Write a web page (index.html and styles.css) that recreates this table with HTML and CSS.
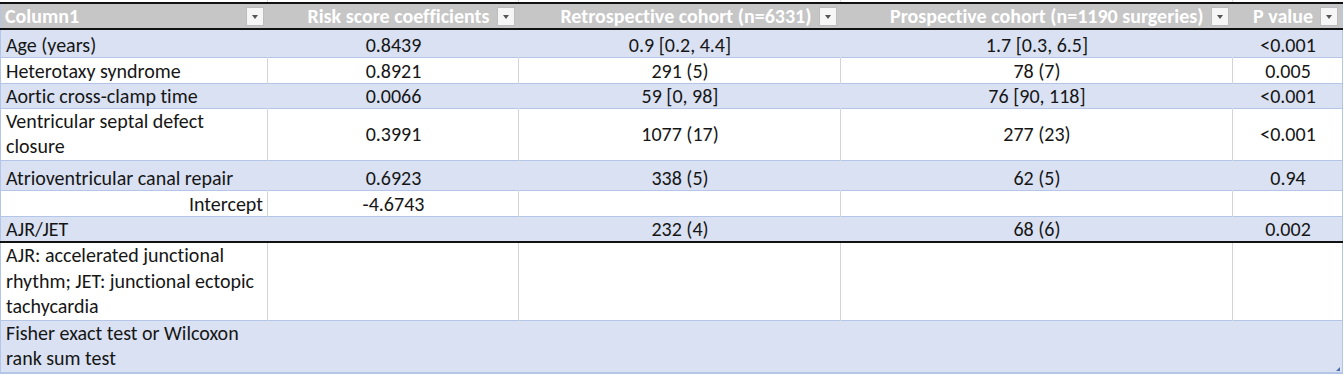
FILE: index.html
```html
<!DOCTYPE html>
<html>
<head>
<meta charset="utf-8">
<link rel="stylesheet" href="styles.css">
</head>
<body>
<div class="sheet">
<div class="topgrid"></div>
<table class="tbl">
  <colgroup>
    <col class="c1"><col class="c2"><col class="c3"><col class="c4"><col class="c5">
  </colgroup>
  <thead>
    <tr class="hdr">
      <th class="left"><span class="htext">Column1</span><span class="dd"></span></th>
      <th><span class="htext">Risk score coefficients</span><span class="dd"></span></th>
      <th><span class="htext">Retrospective cohort (n=6331)</span><span class="dd"></span></th>
      <th><span class="htext">Prospective cohort (n=1190 surgeries)</span><span class="dd"></span></th>
      <th><span class="htext">P value</span><span class="dd"></span></th>
    </tr>
  </thead>
  <tbody>
    <tr class="band r-28"><td class="left">Age (years)</td><td>0.8439</td><td>0.9 [0.2, 4.4]</td><td>1.7 [0.3, 6.5]</td><td>&lt;0.001</td></tr>
    <tr class="r-26"><td class="left">Heterotaxy syndrome</td><td>0.8921</td><td>291 (5)</td><td>78 (7)</td><td>0.005</td></tr>
    <tr class="band r-25"><td class="left">Aortic cross-clamp time</td><td>0.0066</td><td>59 [0, 98]</td><td>76 [90, 118]</td><td>&lt;0.001</td></tr>
    <tr class="r-vent"><td class="left wrap top">Ventricular septal defect closure</td><td class="mid">0.3991</td><td class="mid">1077 (17)</td><td class="mid">277 (23)</td><td class="mid">&lt;0.001</td></tr>
    <tr class="band r-30"><td class="left">Atrioventricular canal repair</td><td>0.6923</td><td>338 (5)</td><td>62 (5)</td><td>0.94</td></tr>
    <tr class="r-26"><td class="right">Intercept</td><td>-4.6743</td><td></td><td></td><td></td></tr>
    <tr class="band r-26 last"><td class="left">AJR/JET</td><td></td><td>232 (4)</td><td>68 (6)</td><td>0.002</td></tr>
    <tr class="r-notes first-foot"><td class="left wrap">AJR: accelerated junctional rhythm; JET: junctional ectopic tachycardia</td><td></td><td></td><td></td><td></td></tr>
    <tr class="band r-fisher nogrid"><td class="left wrap">Fisher exact test or Wilcoxon rank sum test</td><td></td><td></td><td></td><td></td></tr>
  </tbody>
</table>
<span class="grip"></span>
</div>
</body>
</html>
```

FILE: styles.css
```css
html, body {
  margin: 0;
  padding: 0;
  background: #ffffff;
}
body {
  font-family: Carlito, Lato, "Open Sans", "Liberation Sans", sans-serif;
  font-size: 20px;
  font-variant-ligatures: none;
  color: #161616;
}
.sheet {
  position: relative;
  width: 1342px;
}
.topgrid {
  height: 2px;
  background:
    linear-gradient(#dadada, #dadada) 267px 0 / 1px 2px no-repeat,
    linear-gradient(#dadada, #dadada) 518px 0 / 1px 2px no-repeat,
    linear-gradient(#dadada, #dadada) 840px 0 / 1px 2px no-repeat,
    linear-gradient(#dadada, #dadada) 1232px 0 / 1px 2px no-repeat;
}
.tbl {
  width: 1342px;
  table-layout: fixed;
  border-collapse: collapse;
  border-left: 1px solid #b4c6e7;
  border-right: 1px solid #b4c6e7;
}
.c1 { width: 267px; }
.c2 { width: 251px; }
.c3 { width: 322px; }
.c4 { width: 392px; }
.c5 { width: 110px; }

.hdr th {
  background: #c6c6c6;
  color: #ffffff;
  font-weight: 700;
  height: 24px;
  line-height: 24px;
  padding: 0 4px 0 4px;
  border-top: 2px solid #111111;
  border-bottom: 2px solid #111111;
  text-align: right;
  white-space: nowrap;
  overflow: hidden;
}
.hdr th.left { text-align: left; }
.hdr th.left .htext { float: left; }
.htext {
  display: inline-block;
  vertical-align: top;
  line-height: 24px;
}
.dd {
  display: inline-block;
  vertical-align: top;
  width: 16px;
  height: 17px;
  margin-top: 3px;
  margin-left: 7px;
  background: #f6f6f6;
  border: 1px solid #bdbdbd;
  position: relative;
}
.hdr th.left .dd { float: right; }
.dd::after {
  content: "";
  position: absolute;
  left: 5px;
  top: 7px;
  border-left: 3px solid transparent;
  border-right: 3px solid transparent;
  border-top: 4px solid #555555;
}

td {
  padding: 0 4px 0 5px;
  text-align: center;
  vertical-align: bottom;
  line-height: 24px;
  border-top: 1px solid #b4c6e7;
  border-left: 1px solid #d4d4d4;
  white-space: normal;
}
td.wrap { line-height: 25.5px; }
td.top { vertical-align: top; }
td.mid { vertical-align: middle; }
tr.band td {
  background: #d9e1f2;
  border-left-color: #d9e1f2;
}
td:first-child { border-left: none; }
td.left { text-align: left; }
td.right { text-align: right; }
tr.last td { border-bottom: 2px solid #111111; }
tr.first-foot td { border-top: none; }
tr.nogrid td { border-left-color: #d9e1f2; }
tbody tr:first-child td { border-top: none; }
tbody tr:last-child td { border-bottom: 2px solid #b4c6e7; }

.r-25 { height: 25px; }
.r-26 { height: 26px; }
.r-28 { height: 28px; }
.r-30 { height: 30px; }
.r-vent { height: 51px; }
.r-notes { height: 77px; }
.r-fisher { height: 50px; }

.grip {
  position: absolute;
  right: 2px;
  bottom: 3px;
  width: 0;
  height: 0;
  border-left: 4px solid transparent;
  border-bottom: 4px solid #4a6fb0;
}
```
